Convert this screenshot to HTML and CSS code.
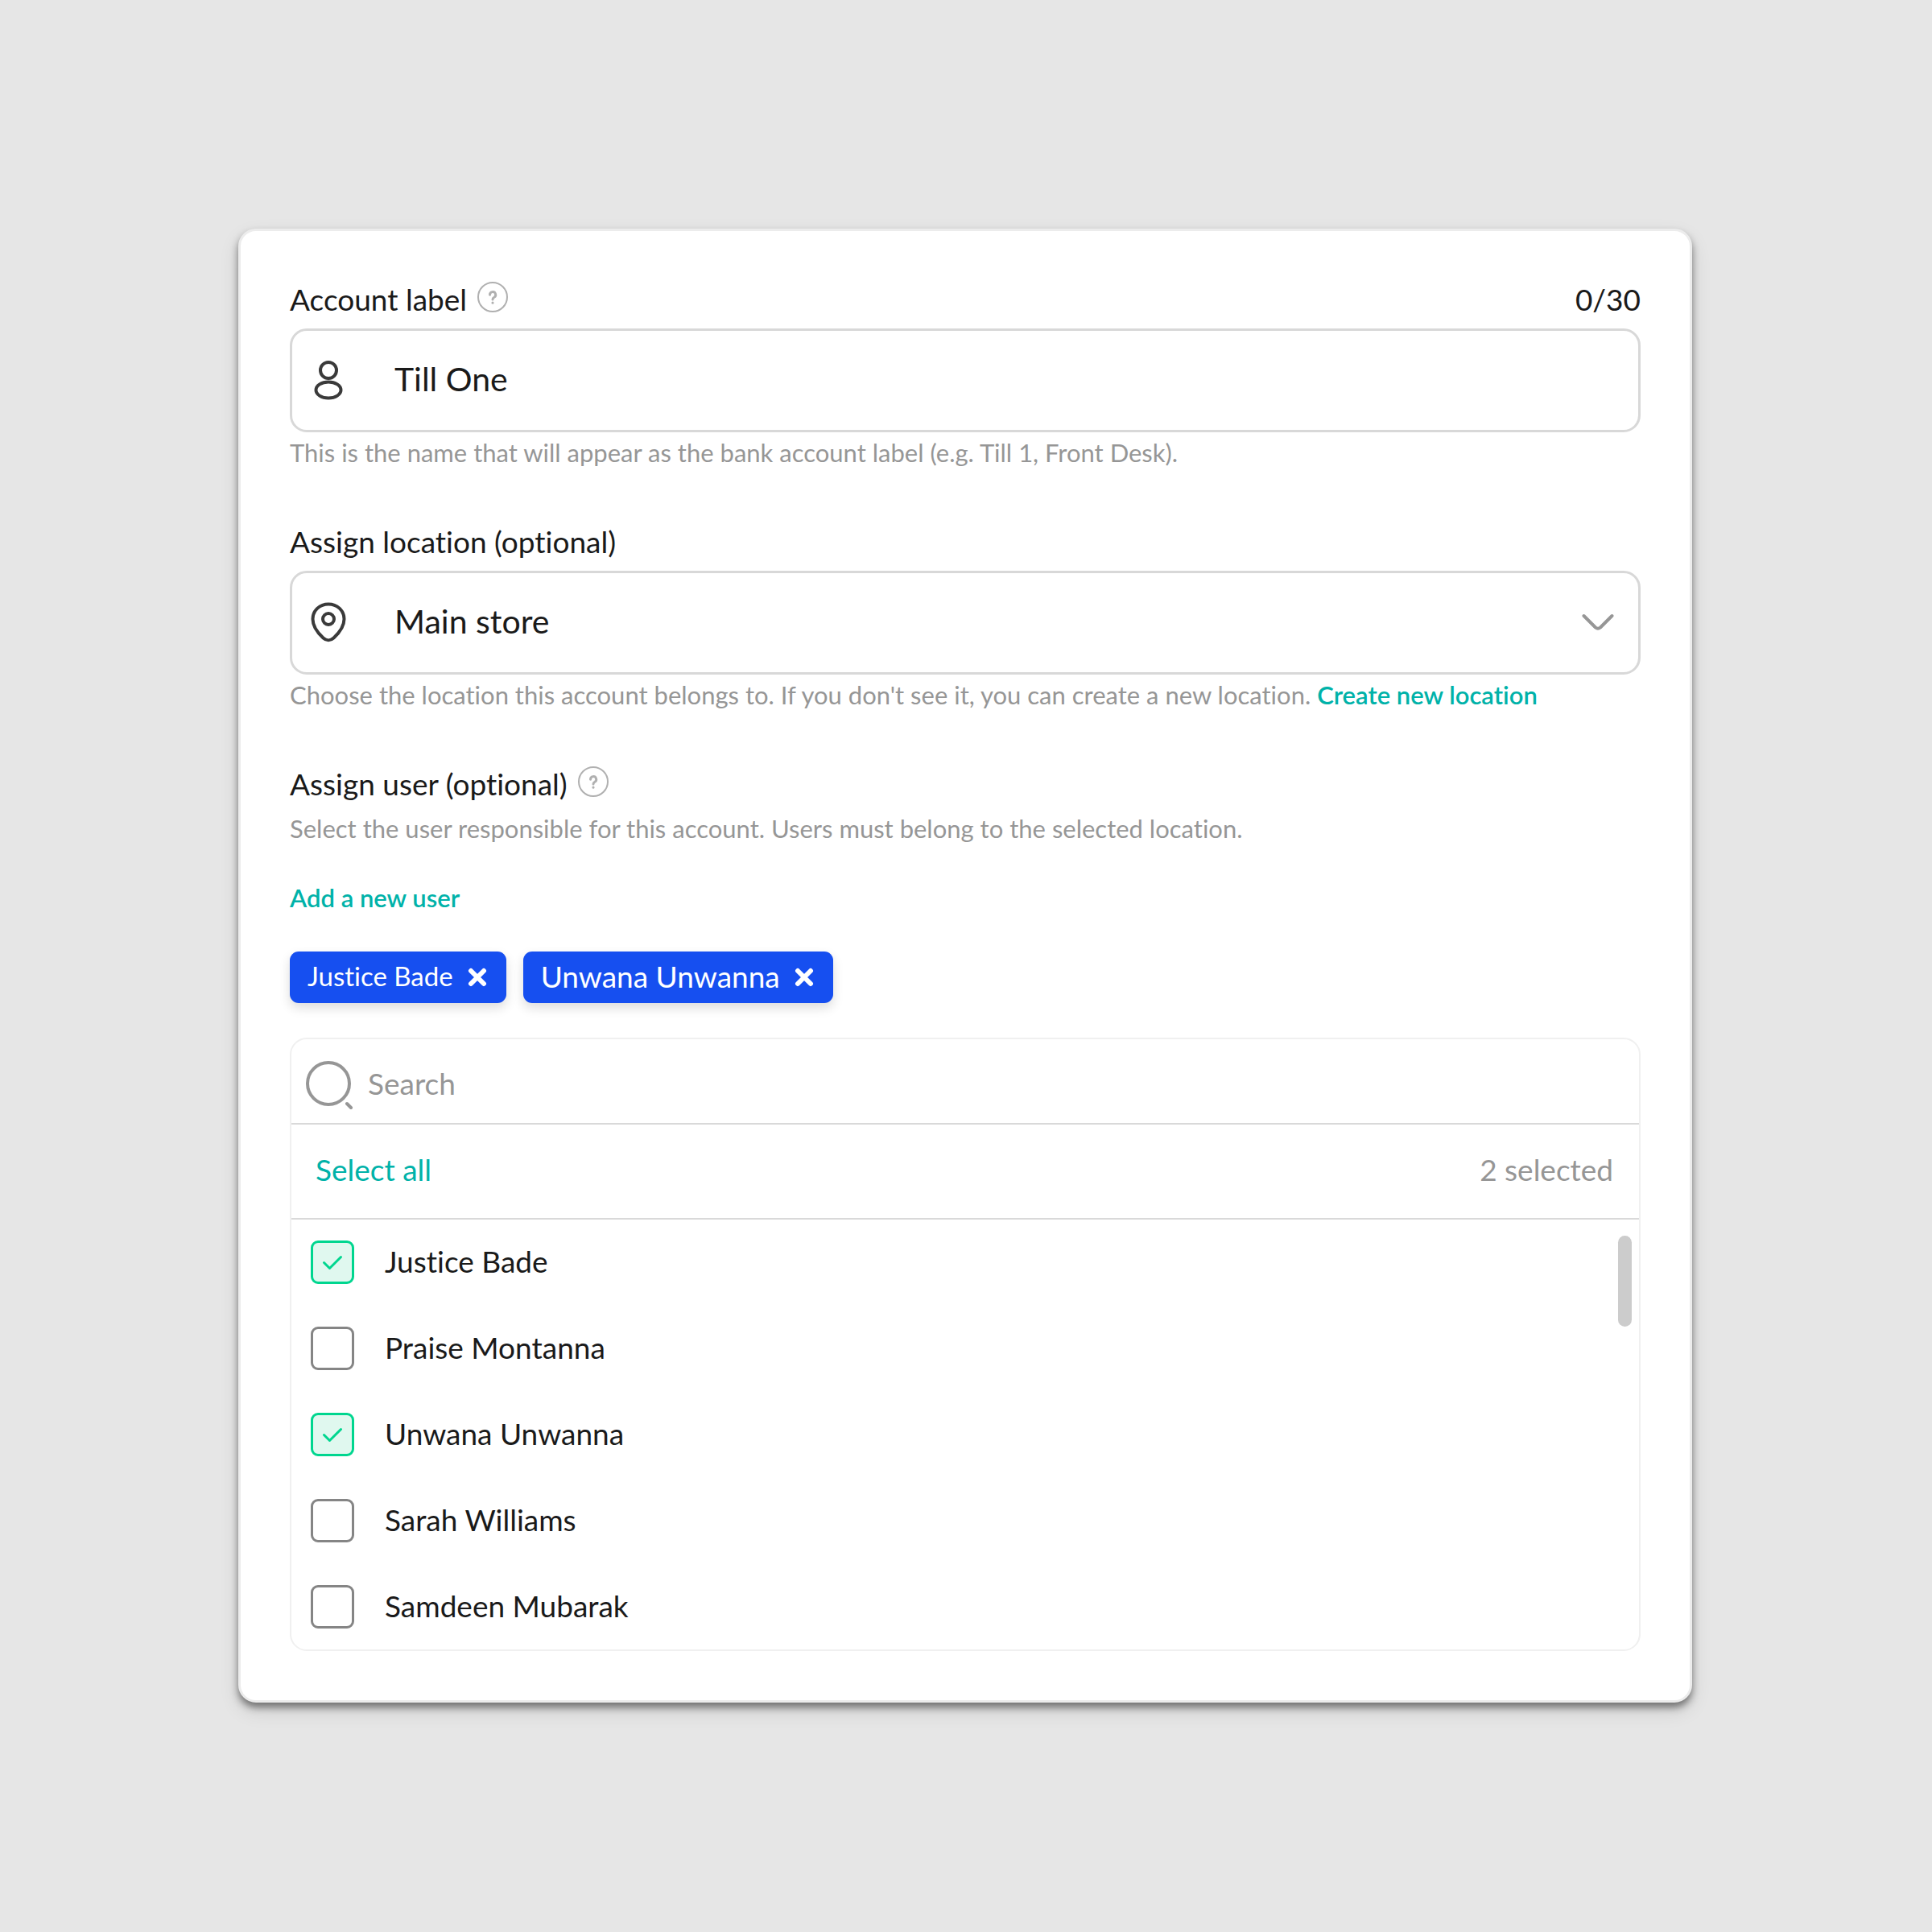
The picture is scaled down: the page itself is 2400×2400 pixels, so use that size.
FILE: index.html
```html
<!DOCTYPE html>
<html lang="en">
<head>
  <meta charset="UTF-8" />
  <meta name="viewport" content="width=device-width, initial-scale=1.0"/>
  <title>Account settings</title>
  <link rel="stylesheet" href="styles.css">
</head>
<body>
  <form class="card">
    <div class="field">
      <div class="label-row">
        <label for="account-label">Account label</label>
        <button type="button" class="help-button" aria-label="About account label">
          <svg viewBox="0 0 40 40"><circle cx="20" cy="20" r="18"/><path class="mark" d="M16.5 17.2a3.6 3.6 0 1 1 5.4 3.1c-1.3.7-1.9 1.3-1.9 2.7"/><path class="mark" d="M20 27v.2"/></svg>
        </button>
        <span class="counter">0/30</span>
      </div>
      <div class="input-box">
        <svg class="field-icon" viewBox="0 0 48 52"><circle cx="24" cy="14" r="10"/><ellipse cx="24" cy="38.5" rx="15.5" ry="10"/></svg>
        <input type="text" id="account-label" value="Till One" />
      </div>
      <p class="hint">This is the name that will appear as the bank account label (e.g. Till 1, Front Desk).</p>
    </div>

    <div class="field">
      <div class="label-row">
        <label for="location">Assign location (optional)</label>
      </div>
      <div class="input-box">
        <svg class="field-icon" viewBox="0 0 48 52"><path d="M24 3.5C34.5 3.5 43.5 11 43.5 22C43.5 31.5 37 39.5 30.5 45.5C26.5 49.2 21.5 49.2 17.5 45.5C11 39.5 4.5 31.5 4.5 22C4.5 11 13.5 3.5 24 3.5Z"/><circle cx="24" cy="22" r="7"/></svg>
        <select id="location">
          <option>Main store</option>
        </select>
        <svg class="chevron" viewBox="0 0 40 24"><path d="M2.5 4L17 18.500Q20 21 23 18.500L37.500 4"/></svg>
      </div>
      <p class="hint">Choose the location this account belongs to. If you don't see it, you can create a new location. <a href="#">Create new location</a></p>
    </div>

    <div class="field users">
      <div class="label-row">
        <label for="search">Assign user (optional)</label>
        <button type="button" class="help-button" aria-label="About assigning users">
          <svg viewBox="0 0 40 40"><circle cx="20" cy="20" r="18"/><path class="mark" d="M16.5 17.2a3.6 3.6 0 1 1 5.4 3.1c-1.3.7-1.9 1.3-1.9 2.7"/><path class="mark" d="M20 27v.2"/></svg>
        </button>
      </div>
      <p class="hint">Select the user responsible for this account. Users must belong to the selected location.</p>
      <a class="add-user" href="#">Add a new user</a>

      <div class="tags">
        <span class="tag tag-small">
          <span>Justice Bade</span>
          <button type="button" aria-label="Remove Justice Bade"><svg viewBox="0 0 24 24"><path d="M4 4L20 20M20 4L4 20"/></svg></button>
        </span>
        <span class="tag">
          <span>Unwana Unwanna</span>
          <button type="button" aria-label="Remove Unwana Unwanna"><svg viewBox="0 0 24 24"><path d="M4 4L20 20M20 4L4 20"/></svg></button>
        </span>
      </div>

      <div class="user-picker">
        <div class="search-row">
          <svg viewBox="0 0 60 60"><circle cx="28" cy="28" r="26"/><path d="M51 53L56 58"/></svg>
          <input type="text" id="search" placeholder="Search" />
        </div>
        <div class="select-row">
          <button type="button">Select all</button>
          <span>2 selected</span>
        </div>
        <div class="user-list">
          <label><input type="checkbox" checked /><svg viewBox="0 0 54 54"><path d="M16.5 27.5L23.5 34.5L37.5 20.5"/></svg><span>Justice Bade</span></label>
          <label><input type="checkbox" /><svg viewBox="0 0 54 54"><path d="M16.5 27.5L23.5 34.5L37.5 20.5"/></svg><span>Praise Montanna</span></label>
          <label><input type="checkbox" checked /><svg viewBox="0 0 54 54"><path d="M16.5 27.5L23.5 34.5L37.5 20.5"/></svg><span>Unwana Unwanna</span></label>
          <label><input type="checkbox" /><svg viewBox="0 0 54 54"><path d="M16.5 27.5L23.5 34.5L37.5 20.5"/></svg><span>Sarah Williams</span></label>
          <label><input type="checkbox" /><svg viewBox="0 0 54 54"><path d="M16.5 27.5L23.5 34.5L37.5 20.5"/></svg><span>Samdeen Mubarak</span></label>
          <span class="scroll-thumb"></span>
        </div>
      </div>
    </div>
  </form>
</body>
</html>
```
FILE: styles.css
```css
:root {
  --page-bg: #e6e6e6;
  --text-color: #1a1a1a;
  --muted-color: #969696;
  --accent-color: #00b2a9;
  --tag-color: #164ff0;
  --field-border: #d8d8d8;
  --line-color: #d9d9d9;
  --check-color: #00d68f;
}

* {
  box-sizing: border-box;
}

body {
  margin: 0;
  padding: 0 2px 2px 0;
  min-height: 100vh;
  display: flex;
  justify-content: center;
  align-items: center;
  background-color: var(--page-bg);
  color: var(--text-color);
  font-family: Lato, "Open Sans", sans-serif;
  font-weight: 400;
  font-size: 37px;
  font-variant-ligatures: none;
}

svg {
  display: block;
  fill: none;
  stroke: currentColor;
  stroke-width: 4;
  stroke-linecap: round;
  stroke-linejoin: round;
}

input, select, button {
  font: inherit;
  color: inherit;
  background: none;
  border: none;
  padding: 0;
  margin: 0;
  outline: none;
}

button, select {
  cursor: pointer;
}

a {
  color: var(--accent-color);
  font-weight: 600;
  text-decoration: none;
}

.card {
  width: 100%;
  max-width: 1806px;
  padding: 62px 61px 61px;
  display: flex;
  flex-direction: column;
  gap: 69px;
  background: #fff;
  border: 3px solid #ececec;
  border-radius: 22px;
  box-shadow: 0 6px 10px rgba(0,0,0,0.45), 0 10px 24px rgba(0,0,0,0.12);
}

.label-row {
  display: flex;
  align-items: center;
  height: 46px;
  margin-bottom: 13px;
}

.help-button {
  margin: 0 0 6px 12px;
  color: #b0b0b0;
}

.help-button svg {
  width: 40px;
  height: 40px;
  stroke-width: 2;
}

.help-button .mark {
  stroke-width: 3;
}

.counter {
  margin-left: auto;
}

.input-box {
  display: flex;
  align-items: center;
  height: 129px;
  padding: 0 30px 0 21px;
  border: 3px solid var(--field-border);
  border-radius: 21px;
}

.input-box input, .input-box select {
  flex: 1;
  min-width: 0;
  height: 100%;
  padding-bottom: 4px;
  font-size: 41px;
  appearance: none;
}

.field-icon {
  width: 48px;
  height: 52px;
  margin-right: 58px;
  color: #3a3a3a;
}

.chevron {
  width: 40px;
  height: 24px;
  color: var(--muted-color);
  pointer-events: none;
}

.hint {
  margin: 6px 0 0;
  font-size: 31px;
  line-height: 38px;
  color: var(--muted-color);
}

.add-user {
  display: block;
  width: fit-content;
  margin: 48px 0;
  font-size: 31px;
  line-height: 38px;
}

.users .hint {
  margin-top: 0;
}

.tags {
  display: flex;
  flex-wrap: wrap;
  gap: 21px;
  margin-bottom: 43px;
}

.tag {
  display: flex;
  align-items: center;
  gap: 18px;
  height: 64px;
  padding: 0 24px 0 22px;
  border-radius: 11px;
  background: var(--tag-color);
  color: #fff;
  box-shadow: 0 6px 14px rgba(0,0,0,0.14);
}

.tag span, .user-list label span {
  padding-bottom: 3px;
}

.tag-small {
  font-size: 33px;
}

.tag svg {
  width: 24px;
  height: 24px;
  stroke-width: 6;
}

.user-picker {
  border: 2px solid #f0f0f0;
  border-radius: 21px;
}

.search-row {
  display: flex;
  align-items: center;
  gap: 17px;
  height: 106px;
  padding: 10px 18px 0;
  border-bottom: 2px solid var(--line-color);
  color: var(--muted-color);
}

.search-row svg {
  width: 60px;
  height: 60px;
}

.search-row input {
  flex: 1;
  min-width: 0;
  padding-bottom: 4px;
}

.search-row input::placeholder {
  color: var(--muted-color);
  opacity: 1;
}

.select-row {
  display: flex;
  justify-content: space-between;
  align-items: center;
  height: 118px;
  padding: 0 32px 4px 30px;
  border-bottom: 2px solid var(--line-color);
  color: var(--muted-color);
}

.select-row button {
  color: var(--accent-color);
}

.user-list {
  position: relative;
  display: flex;
  flex-direction: column;
  align-items: flex-start;
  gap: 53px;
  padding: 26px 24px;
}

.user-list label {
  display: flex;
  align-items: center;
  height: 54px;
  cursor: pointer;
}

.user-list input {
  appearance: none;
  width: 54px;
  height: 54px;
  margin-right: 38px;
  border: 3px solid #858585;
  border-radius: 9px;
}

.user-list input:checked {
  background: #e0f8ef;
  border-color: var(--check-color);
}

/* tick sits on top of the box */
.user-list svg {
  position: absolute;
  width: 54px;
  height: 54px;
  color: var(--check-color);
  stroke-width: 3;
  visibility: hidden;
  pointer-events: none;
}

.user-list input:checked + svg {
  visibility: visible;
}

.scroll-thumb {
  position: absolute;
  top: 20px;
  right: 9px;
  width: 17px;
  height: 113px;
  border-radius: 9px;
  background: #ccc;
}
```
